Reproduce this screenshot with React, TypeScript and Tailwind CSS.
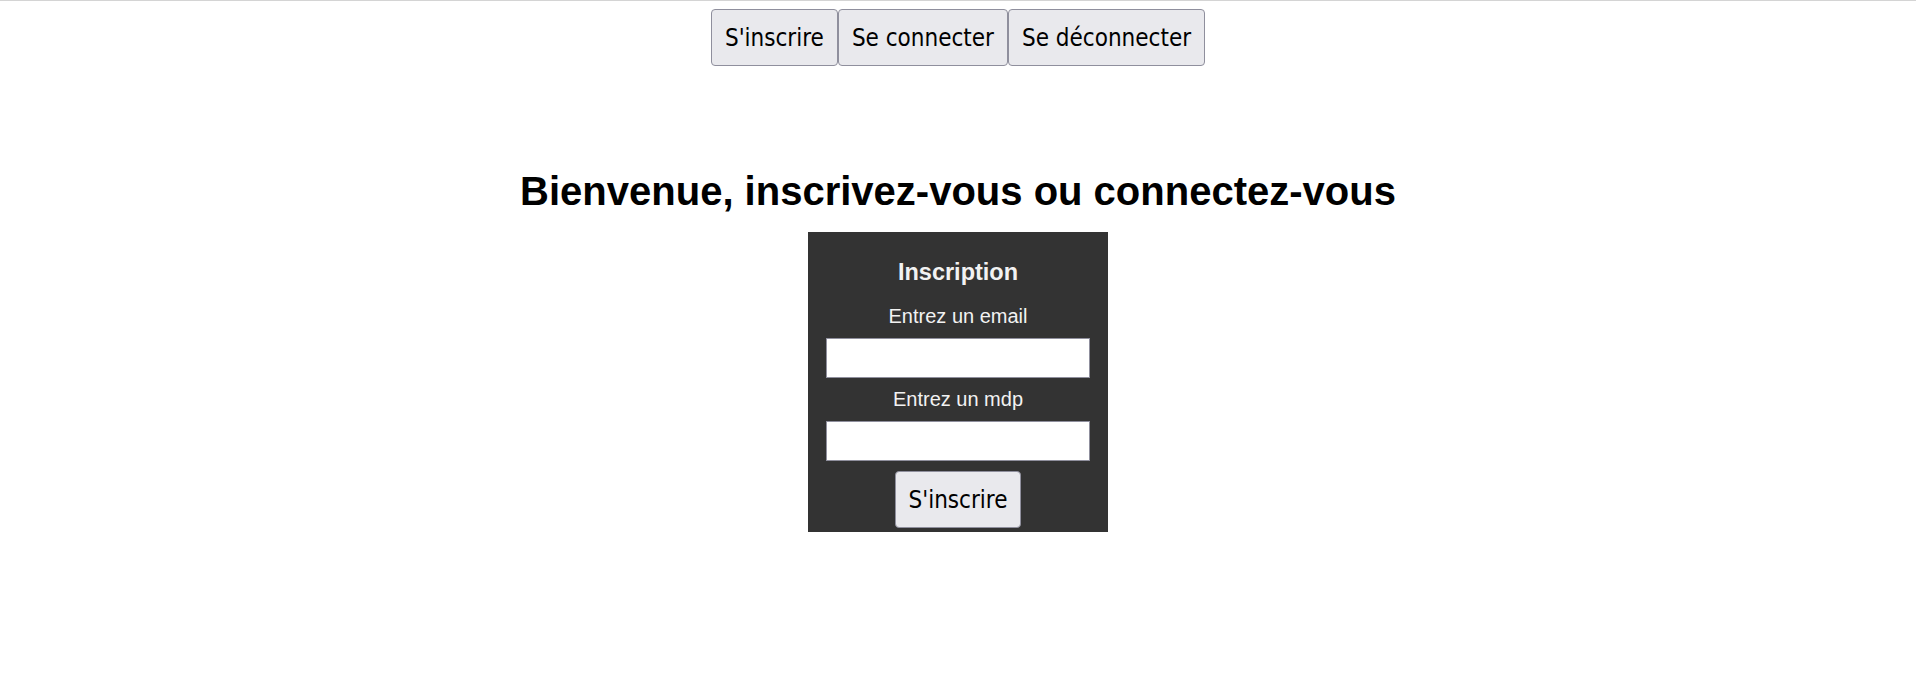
const buttonClass =
	'rounded-[4px] border border-[#8f8f9d] bg-[#e9e9ed] px-[13px] pt-[14px] pb-[12px] text-[24px] leading-[29px] text-black font-["DejaVu_Sans_Condensed","Liberation_Sans",sans-serif] hover:bg-[#d0d0d7]';

const NavBar = () => (
	<nav className="flex justify-center pt-[8px]">
		<button className={buttonClass}>S'inscrire</button>
		<button className={buttonClass}>Se connecter</button>
		<button className={buttonClass}>Se déconnecter</button>
	</nav>
);

const SignupForm = () => (
	<form
		className="mt-[18px] flex h-[300px] w-[300px] flex-col items-center bg-[#333333] px-[18px] pt-[27px] text-[#f2f2f2]"
		onSubmit={(e) => e.preventDefault()}
	>
		<h3 className="text-[23.5px] font-bold leading-[27px]">Inscription</h3>
		<label htmlFor="email" className="mt-[19px] text-[20px] leading-[23px]">
			Entrez un email
		</label>
		<input
			id="email"
			type="email"
			className="mt-[10px] h-[40px] w-full border border-[#8f8f9d] bg-white text-black"
		/>
		<label htmlFor="mdp" className="mt-[10px] text-[20px] leading-[23px]">
			Entrez un mdp
		</label>
		<input
			id="mdp"
			type="password"
			className="mt-[10px] h-[40px] w-full border border-[#8f8f9d] bg-white text-black"
		/>
		<button type="submit" className={`mt-[10px] ${buttonClass}`}>
			S'inscrire
		</button>
	</form>
);

export default function App() {
	return (
		<div className="min-h-screen w-full border-t border-[#d4d4d4] bg-white font-['Liberation_Sans',Arial,sans-serif]">
			<NavBar />
			<main className="flex flex-col items-center">
				<h1 className="mt-[102px] text-[40px] font-bold leading-[46px] text-black">
					Bienvenue, inscrivez-vous ou connectez-vous
				</h1>
				<SignupForm />
			</main>
		</div>
	);
}
